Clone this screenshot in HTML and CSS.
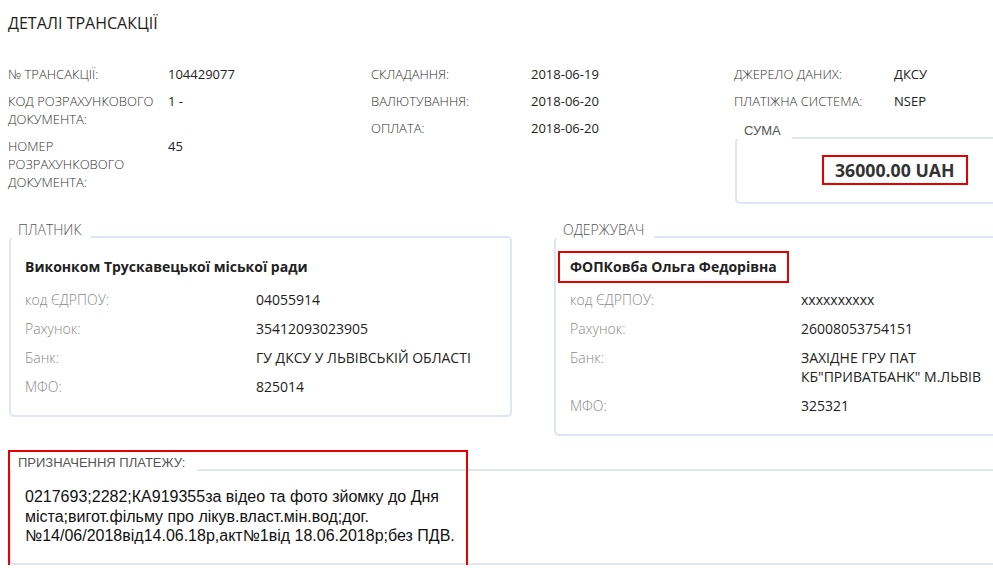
FILE: index.html
```
<!DOCTYPE html>
<html lang="uk">
  <head>
    <meta charset="UTF-8" />
    <meta name="viewport" content="width=device-width, initial-scale=1.0" />
    <title>Деталі трансакції</title>
    <link rel="stylesheet" href="styles.css">
  </head>
  <body>
    <div class="page">
      <h1 class="title">ДЕТАЛІ ТРАНСАКЦІЇ</h1>

      <div class="info">
        <dl class="info_col">
          <div class="info_row"><dt>№ ТРАНСАКЦІЇ:</dt><dd>104429077</dd></div>
          <div class="info_row"><dt>КОД РОЗРАХУНКОВОГО ДОКУМЕНТА:</dt><dd>1 -</dd></div>
          <div class="info_row"><dt>НОМЕР РОЗРАХУНКОВОГО ДОКУМЕНТА:</dt><dd>45</dd></div>
        </dl>
        <dl class="info_col">
          <div class="info_row"><dt>СКЛАДАННЯ:</dt><dd>2018-06-19</dd></div>
          <div class="info_row"><dt>ВАЛЮТУВАННЯ:</dt><dd>2018-06-20</dd></div>
          <div class="info_row"><dt>ОПЛАТА:</dt><dd>2018-06-20</dd></div>
        </dl>
        <div class="info_col">
          <dl class="info_list">
            <div class="info_row"><dt>ДЖЕРЕЛО ДАНИХ:</dt><dd>ДКСУ</dd></div>
            <div class="info_row"><dt>ПЛАТІЖНА СИСТЕМА:</dt><dd>NSEP</dd></div>
          </dl>
          <fieldset class="box sum">
            <legend class="legend_plain"><span>СУМА</span></legend>
            <span class="amount marked">36000.00 UAH</span>
          </fieldset>
        </div>
      </div>

      <div class="parties">
        <fieldset class="box party">
          <legend><span>ПЛАТНИК</span></legend>
          <div class="party_name">Виконком Трускавецької міської ради</div>
          <dl class="party_rows">
            <div class="party_row"><dt>код ЄДРПОУ:</dt><dd>04055914</dd></div>
            <div class="party_row"><dt>Рахунок:</dt><dd>35412093023905</dd></div>
            <div class="party_row"><dt>Банк:</dt><dd>ГУ ДКСУ У ЛЬВІВСЬКІЙ ОБЛАСТІ</dd></div>
            <div class="party_row"><dt>МФО:</dt><dd>825014</dd></div>
          </dl>
        </fieldset>
        <fieldset class="box party">
          <legend><span>ОДЕРЖУВАЧ</span></legend>
          <div class="party_name"><span class="marked name_mark">ФОПКовба Ольга Федорівна</span></div>
          <dl class="party_rows">
            <div class="party_row"><dt>код ЄДРПОУ:</dt><dd>xxxxxxxxxx</dd></div>
            <div class="party_row"><dt>Рахунок:</dt><dd>26008053754151</dd></div>
            <div class="party_row"><dt>Банк:</dt><dd>ЗАХІДНЕ ГРУ ПАТ КБ"ПРИВАТБАНК" М.ЛЬВІВ</dd></div>
            <div class="party_row"><dt>МФО:</dt><dd>325321</dd></div>
          </dl>
        </fieldset>
      </div>

      <div class="purpose_wrap">
        <fieldset class="box purpose">
          <legend class="legend_plain"><span>ПРИЗНАЧЕННЯ ПЛАТЕЖУ:</span></legend>
          <p class="purpose_text">0217693;2282;КА919355за відео та фото зйомку до Дня міста;вигот.фільму про лікув.власт.мін.вод;дог. №14/06/2018від14.06.18р,акт№1від 18.06.2018р;без ПДВ.</p>
        </fieldset>
        <div class="purpose_mark"></div>
      </div>
    </div>
  </body>
</html>
```

FILE: styles.css
```
html,
body {
  margin: 0;
  background: #fff;
  overflow: hidden;
}

body {
  font-family: "Open Sans", "Liberation Sans", sans-serif;
  font-size: 13px;
  color: #333;
}

.page {
  width: 1100px;
  padding: 13px 0 0 8px;
}

.title {
  margin: 0;
  font-size: 16px;
  line-height: 20px;
  font-weight: 400;
  color: #1d1d1d;
}

/* top info block */
.info {
  display: grid;
  grid-template-columns: 363px 363px 363px;
  margin-top: 32px;
}

.info_col,
.info_list {
  display: flex;
  flex-direction: column;
  gap: 9px;
  margin: 0;
}

.info_row {
  display: grid;
  grid-template-columns: 160px 1fr;
  line-height: 18px;
}

.info_row dt {
  font-weight: 300;
  color: #333;
}

.info_row dd {
  margin: 0;
  color: #222;
}

/* boxes with a legend on the top border */
.box {
  margin: 0 0 0 1px;
  border: 2px solid #dfe5f2;
  border-radius: 5px;
  min-width: 0;
}

.box legend {
  margin-left: -16px;
  padding: 0 10px 0 9px;
  font-size: 14px;
  line-height: 2px;
  font-weight: 300;
  color: #555;
}

.box legend span {
  position: relative;
  top: -7px;
}

.box .legend_plain {
  font-family: "Liberation Sans", Arial, sans-serif;
  font-size: 13px;
  font-weight: 400;
  padding-right: 11px;
}

.sum {
  margin-top: 18px;
  padding: 16px 14px 17px 85px;
}

.sum legend {
  margin-left: -87px;
}

.amount {
  display: inline-block;
  padding: 0 11px;
  font-size: 17.7px;
  line-height: 26px;
  font-weight: 700;
  color: #333;
}

.marked {
  border: 2px solid #e60000;
}

/* payer / receiver */
.parties {
  display: grid;
  grid-template-columns: 504px 504px;
  column-gap: 41px;
  align-items: start;
  margin-top: 32px;
  font-size: 14px;
}

.party {
  padding: 20px 14px 19px 14px;
}

.party_name {
  font-weight: 700;
  line-height: 18px;
  color: #222;
}

.name_mark {
  display: inline-block;
  margin: -7px -12px;
  padding: 5px 10px;
}

.party_rows {
  display: flex;
  flex-direction: column;
  gap: 10px;
  margin: 14px 0 0;
}

.party_row {
  display: grid;
  grid-template-columns: 231px 230px;
  line-height: 19px;
}

.party_row dt {
  font-weight: 300;
  color: #8a8a8a;
}

.party_row dd {
  margin: 0;
  color: #222;
}

/* purpose */
.purpose_wrap {
  position: relative;
  margin-top: 33px;
}

.purpose {
  padding: 16px 14px 17px 14px;
}

.box .purpose_legend,
.purpose .legend_plain {
  padding-right: 12px;
}

.purpose_text {
  margin: 0;
  max-width: 440px;
  font-family: "Liberation Sans", Arial, sans-serif;
  font-size: 16px;
  line-height: 19.5px;
  color: #111;
}

.purpose_mark {
  position: absolute;
  left: 0;
  top: -19px;
  width: 456px;
  height: 113px;
  border: 2px solid #e60000;
  pointer-events: none;
}
```
